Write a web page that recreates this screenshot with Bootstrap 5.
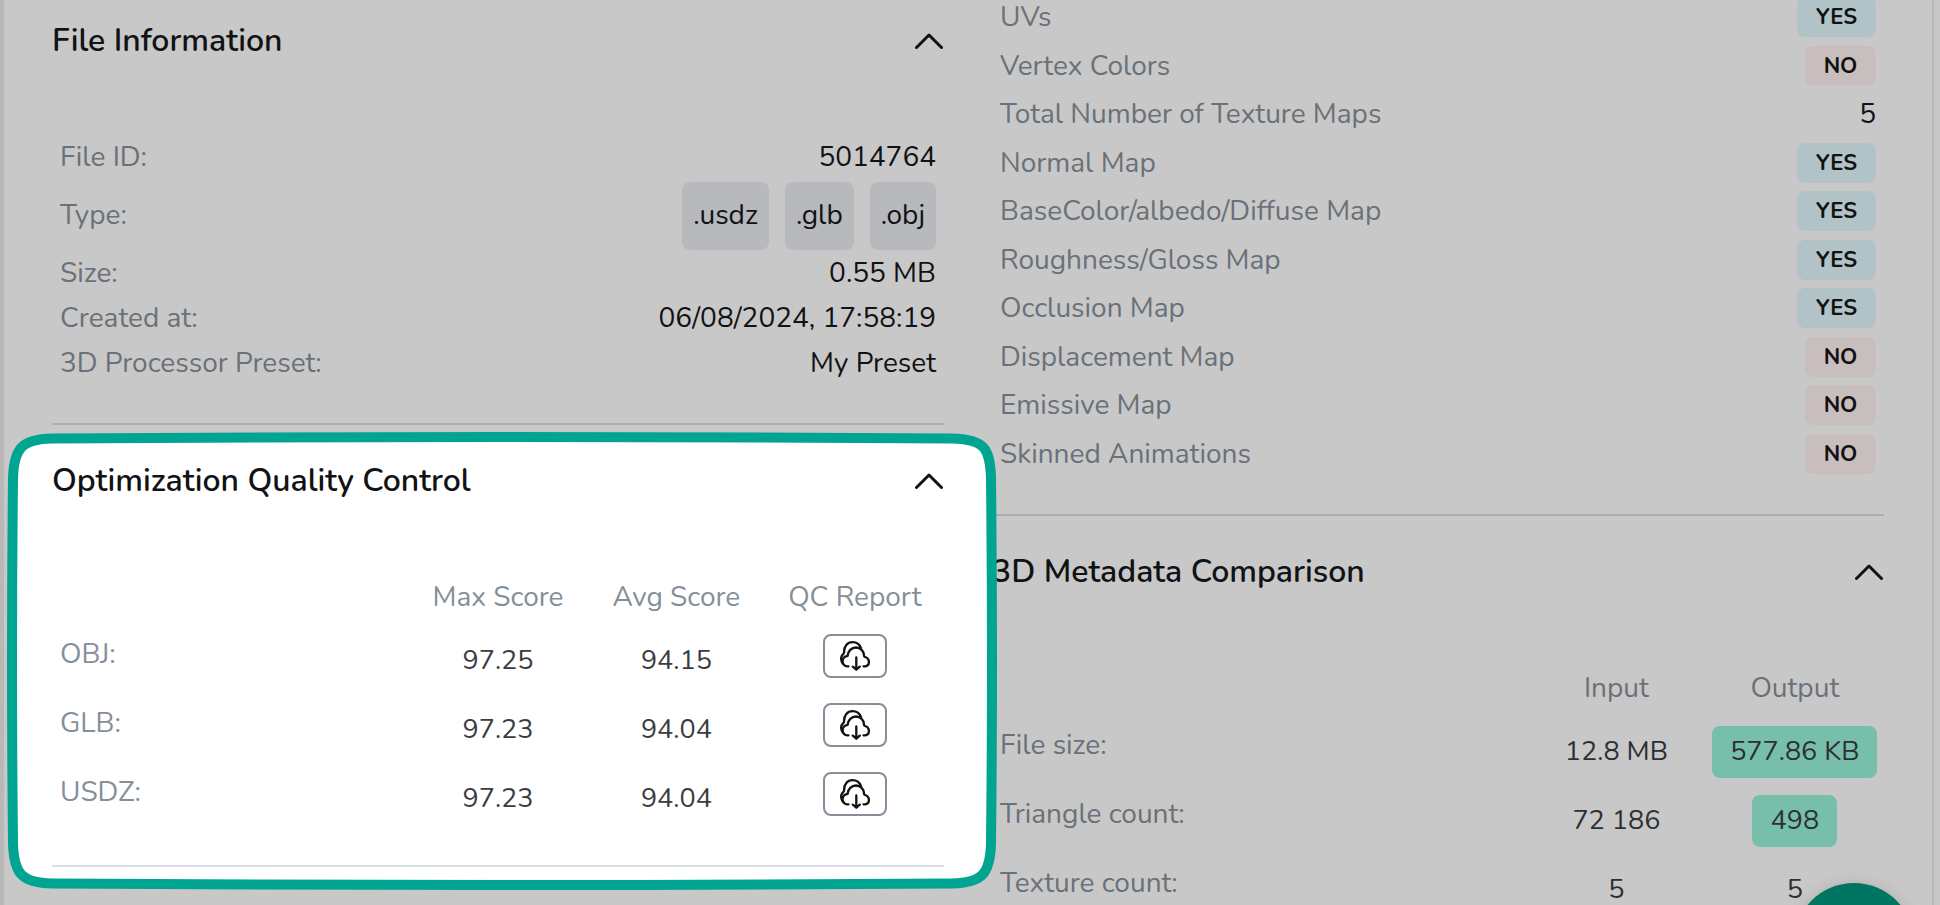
<!DOCTYPE html>
<html lang="en">
<head>
<meta charset="utf-8">
<meta name="viewport" content="width=device-width, initial-scale=1">
<title>3D file details</title>
<link href="https://cdn.jsdelivr.net/npm/bootstrap@5.3.0/dist/css/bootstrap.min.css" rel="stylesheet">
<style>
  body { background: #c8c8c8; color: #111214; font-family: Nunito, Lato, sans-serif; font-size: 28px; line-height: 45px; }
  .details-panel { border-left: 4px solid #b8b8b8; border-right: 2px solid #b8b8b8; margin-right: 6px; }
  .soft { color: #6a7178; }
  .section-first { padding-top: 21px; }
  .section-next { padding-top: 36px; }
  .section-head { margin-bottom: 74px; }
  .section-head h2 { font-size: 32px; line-height: 40px; font-weight: 600; }
  .toggle { border: 0; background: none; color: inherit; padding: 0 1px 0 0; line-height: 0; }
  .rule { border: 0; border-top: 2px solid #a8afb5; opacity: 1; margin: 37px 0 0; }
  .types { padding: 2px 0 1px; line-height: 66px; }
  .type-tag { background: #b7b9bc; border-radius: 8px; padding: 0 11px 2px; }
  .checks { margin-top: -3px; height: 480px; padding-bottom: 3px; line-height: 40px; }
  .flag { border-radius: 8px; font-size: 22px; font-weight: 700; text-align: center; }
  .flag-yes { background: #b1c3c6; width: 79px; }
  .flag-no { background: #c8bebe; width: 71px; }
  .scores { width: 100%; table-layout: fixed; margin-bottom: 38px; }
  .scores th { font-weight: 400; color: #6a7178; padding: 0; }
  .scores thead th { text-align: center; width: 20%; }
  .scores thead th:first-child { width: 40%; }
  .scores tbody th { padding: 12px 8px; vertical-align: top; }
  .scores td { height: 69px; padding: 15px 0 0; vertical-align: top; text-align: center; font-size: 27px; line-height: 52px; color: #2d2f33; }
  .scores td.report-cell { padding-top: 14px; }
  .gain { display: inline-block; background: #77bfab; border-radius: 8px; padding: 0 18px; }
  .spot { position: relative; z-index: 1; }
  .spot > * { position: relative; }
  .spot > .spot-frame { position: absolute; left: -45px; top: 7px; width: calc(100% + 98px); height: calc(100% + 16px); }
  .spot .scores th { color: #858f99; }
  .spot .scores td { color: #3a3c42; }
  .spot .rule { border-color: #dce0e5; margin-top: 0; }
  .report { display: inline-flex; width: 64px; height: 44px; border: 2px solid #858f99; border-radius: 8px; background: #fff; color: #111214; align-items: center; justify-content: center; padding: 0; vertical-align: top; }
  .chat { position: fixed; right: 26px; bottom: -98px; width: 120px; height: 120px; border: 0; border-radius: 50%; background: #007562; box-shadow: 0 2px 16px rgba(0,0,0,.15); z-index: 2; }
</style>
</head>
<body>
<svg width="0" height="0" class="position-absolute" aria-hidden="true">
  <symbol id="chevron" viewBox="0 0 28 16"><path d="M1.500 14.500 14 2l12.500 12.500" fill="none" stroke="currentColor" stroke-width="3" stroke-linecap="round" stroke-linejoin="round"/></symbol>
  <symbol id="cloud" viewBox="0 0 30 30"><g fill="none" stroke="currentColor" stroke-width="2.300" stroke-linecap="round" stroke-linejoin="round">
    <path d="M8.500 25.300H7.500C4.500 25.300 2.400 22.800 2.600 19.800 2.800 16.800 5 15.200 7.600 14.800 8 10 11.500 6.500 16 6.500 20.500 6.500 24 10 24 14.500 24 15.300 24.200 15.800 25 16 27.500 16.800 28.900 18.600 28.900 21 28.900 23.600 27.500 25.300 24.500 25.300H23.500"/>
    <path d="M2.900 22.500C.8 20 .4 16 2.600 13.700 3.500 12.900 4.200 12.500 4.100 11.500 3.800 5 7.500 1.200 12.500 1.200 16.500 1.200 19.500 3 21 7.200"/>
    <path d="M16.300 16.500V28.600M12.800 25.600l3.500 3.100 3.500-3.100"/></g></symbol>
</svg>

<main class="details-panel vh-100 overflow-hidden px-5">
  <div class="row gx-5">
    <div class="col-6">
      <section class="section-first">
        <div class="section-head d-flex justify-content-between align-items-center">
          <h2 class="m-0">File Information</h2>
          <button class="toggle" type="button" aria-label="Collapse File Information"><svg width="28" height="16"><use href="#chevron"/></svg></button>
        </div>
        <div class="px-2">
          <div class="d-flex justify-content-between"><span class="soft">File ID:</span><span>5014764</span></div>
          <div class="d-flex justify-content-between types"><span class="soft">Type:</span>
            <span class="d-flex gap-3"><span class="type-tag">.usdz</span><span class="type-tag">.glb</span><span class="type-tag">.obj</span></span></div>
          <div class="d-flex justify-content-between"><span class="soft">Size:</span><span>0.55 MB</span></div>
          <div class="d-flex justify-content-between"><span class="soft">Created at:</span><span>06/08/2024, 17:58:19</span></div>
          <div class="d-flex justify-content-between"><span class="soft">3D Processor Preset:</span><span>My Preset</span></div>
        </div>
        <hr class="rule">
      </section>

      <section class="spot section-next">
        <svg class="spot-frame" viewBox="0 0 989 458" preserveAspectRatio="none" aria-hidden="true"><path d="M45 6.500Q494 3.500 944 6.500C976 7 982 16 983 46Q985 229 983 412C982 442 974 451 944 451.500Q494 454.500 45 451.500C15 451 7 442 6 412Q4 229 6 46C7 16 15 7 45 6.500Z" fill="#fff" stroke="#00a591" stroke-width="10"/></svg>
        <div class="section-head d-flex justify-content-between align-items-center">
          <h2 class="m-0">Optimization Quality Control</h2>
          <button class="toggle" type="button" aria-label="Collapse Optimization Quality Control"><svg width="28" height="16"><use href="#chevron"/></svg></button>
        </div>
        <table class="scores">
          <thead><tr><th></th><th scope="col">Max Score</th><th scope="col">Avg Score</th><th scope="col">QC Report</th></tr></thead>
          <tbody>
            <tr><th scope="row">OBJ:</th><td>97.25</td><td>94.15</td><td class="report-cell"><button class="report" type="button" aria-label="Download OBJ report"><svg width="30" height="30"><use href="#cloud"/></svg></button></td></tr>
            <tr><th scope="row">GLB:</th><td>97.23</td><td>94.04</td><td class="report-cell"><button class="report" type="button" aria-label="Download GLB report"><svg width="30" height="30"><use href="#cloud"/></svg></button></td></tr>
            <tr><th scope="row">USDZ:</th><td>97.23</td><td>94.04</td><td class="report-cell"><button class="report" type="button" aria-label="Download USDZ report"><svg width="30" height="30"><use href="#cloud"/></svg></button></td></tr>
          </tbody>
        </table>
        <hr class="rule">
      </section>
    </div>

    <div class="col-6">
      <section>
        <div class="checks d-flex flex-column justify-content-between px-2">
          <div class="d-flex justify-content-between"><span class="soft">UVs</span><span class="flag flag-yes">YES</span></div>
          <div class="d-flex justify-content-between"><span class="soft">Vertex Colors</span><span class="flag flag-no">NO</span></div>
          <div class="d-flex justify-content-between"><span class="soft">Total Number of Texture Maps</span><span>5</span></div>
          <div class="d-flex justify-content-between"><span class="soft">Normal Map</span><span class="flag flag-yes">YES</span></div>
          <div class="d-flex justify-content-between"><span class="soft">BaseColor/albedo/Diffuse Map</span><span class="flag flag-yes">YES</span></div>
          <div class="d-flex justify-content-between"><span class="soft">Roughness/Gloss Map</span><span class="flag flag-yes">YES</span></div>
          <div class="d-flex justify-content-between"><span class="soft">Occlusion Map</span><span class="flag flag-yes">YES</span></div>
          <div class="d-flex justify-content-between"><span class="soft">Displacement Map</span><span class="flag flag-no">NO</span></div>
          <div class="d-flex justify-content-between"><span class="soft">Emissive Map</span><span class="flag flag-no">NO</span></div>
          <div class="d-flex justify-content-between"><span class="soft">Skinned Animations</span><span class="flag flag-no">NO</span></div>
        </div>
        <hr class="rule">
      </section>

      <section class="section-next">
        <div class="section-head d-flex justify-content-between align-items-center">
          <h2 class="m-0">3D Metadata Comparison</h2>
          <button class="toggle" type="button" aria-label="Collapse 3D Metadata Comparison"><svg width="28" height="16"><use href="#chevron"/></svg></button>
        </div>
        <table class="scores">
          <thead><tr><th></th><th></th><th scope="col">Input</th><th scope="col">Output</th></tr></thead>
          <tbody>
            <tr><th scope="row" colspan="2">File size:</th><td>12.8 MB</td><td><span class="gain">577.86 KB</span></td></tr>
            <tr><th scope="row" colspan="2">Triangle count:</th><td>72 186</td><td><span class="gain">498</span></td></tr>
            <tr><th scope="row" colspan="2">Texture count:</th><td>5</td><td>5</td></tr>
          </tbody>
        </table>
      </section>
    </div>
  </div>
</main>
<button class="chat" type="button" aria-label="Open chat"></button>
<script src="https://cdn.jsdelivr.net/npm/bootstrap@5.3.0/dist/js/bootstrap.bundle.min.js"></script>
</body>
</html>
